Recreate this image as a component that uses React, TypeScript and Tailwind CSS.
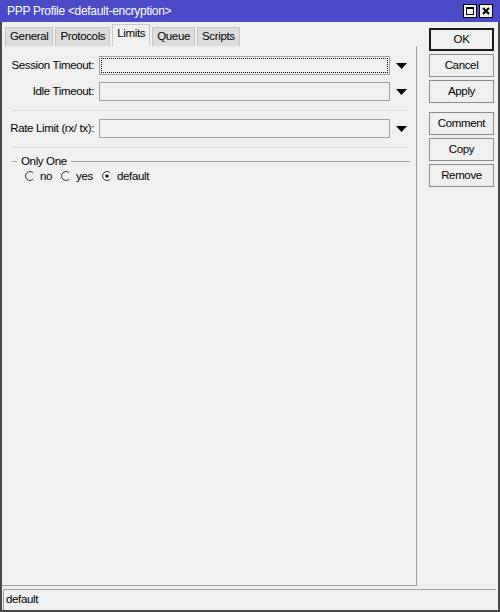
import React from "react";

const font = { fontFamily: '"Liberation Sans", Arial, sans-serif' };

function Arrow() {
  return (
    <svg width="11" height="6" viewBox="0 0 11 6" className="shrink-0">
      <path d="M0 0 H11 L5.5 6 Z" fill="#000" />
    </svg>
  );
}

function Radio({ checked }: { checked?: boolean }) {
  return (
    <svg width="10" height="10" viewBox="0 0 10 10" className="shrink-0">
      <path d="M8.2 1.8 A4.5 4.5 0 1 0 8.2 8.2" fill="none" stroke="#333" strokeWidth="1" />
      <path d="M8.2 8.2 A4.5 4.5 0 0 0 8.2 1.8" fill="none" stroke="#e0e0e0" strokeWidth="1" />
      {checked && <circle cx="5" cy="5" r="1.6" fill="#000" />}
    </svg>
  );
}

function Field({ label, focused }: { label: string; focused?: boolean }) {
  return (
    <div className="flex items-center h-[19px]">
      <div className="w-[95px] text-right pr-[5px] whitespace-nowrap">{label}</div>
      <div className="w-[291px] h-[19px] border border-[#a0a0a0] bg-[#f0f0f0] p-[1px]">
        {focused && <div className="h-full border border-dotted border-black" />}
      </div>
      <div className="ml-[6px]">
        <Arrow />
      </div>
    </div>
  );
}

function Btn({ children, primary }: { children: React.ReactNode; primary?: boolean }) {
  return (
    <div
      className={
        "w-[65px] h-[23px] flex items-center justify-center bg-[#f0f0f0] " +
        (primary ? "border-2 border-[#1a1a1a]" : "border border-[#8c8c8c]")
      }
    >
      {children}
    </div>
  );
}

const tabs = ["General", "Protocols", "Limits", "Queue", "Scripts"];

export default function App() {
  return (
    <div
      style={font}
      className="w-[500px] h-[612px] flex flex-col bg-[#f0f0f0] border-2 border-t-0 border-[#474747] text-[11.5px] tracking-[-0.35px] text-black leading-none"
    >
      {/* title bar */}
      <div className="h-[22px] bg-[#4b4bc8] flex items-center pl-[5px] pr-[7px] text-white text-[12px] tracking-[-0.3px] -mx-[2px]">
        <span className="flex-1 pl-[2px]">PPP Profile &lt;default-encryption&gt;</span>
        <div className="flex gap-[2px]">
          <div className="w-[14px] h-[14px] bg-[#f0f0f0] border border-black flex items-center justify-center">
            <div className="w-[8px] h-[8px] border border-black border-t-2" />
          </div>
          <div className="w-[14px] h-[14px] bg-[#f0f0f0] border border-black flex items-center justify-center">
            <svg width="8" height="8" viewBox="0 0 8 8">
              <path d="M1 1 L7 7 M7 1 L1 7" stroke="#000" strokeWidth="2" />
            </svg>
          </div>
        </div>
      </div>

      <div className="flex-1 flex">
        {/* left: tabs + page */}
        <div className="w-[416px] flex flex-col">
          <div className="flex items-end h-[24px] pl-[3px] gap-[2px]">
            {tabs.map((t) => (
              <div
                key={t}
                className={
                  "px-[4px] flex items-center border border-b-0 " +
                  (t === "Limits"
                    ? "h-[22px] bg-[#f0f0f0] border-[#c8c8c8] pb-[3px]"
                    : "h-[19px] bg-[#dcdcdc] border-[#c4c4c4]")
                }
              >
                {t}
              </div>
            ))}
          </div>

          <div className="flex-1 border-r border-b border-[#a0a0a0] pt-[10px] pl-[2px]">
            <div className="flex flex-col">
              <Field label="Session Timeout:" focused />
              <div className="h-[7px]" />
              <Field label="Idle Timeout:" />
              <div className="mx-[8px] mt-[9px] mb-[8px] border-t border-[#dcdcdc]" />
              <Field label="Rate Limit (rx/ tx):" />
              <div className="mx-[8px] mt-[9px] border-t border-[#dcdcdc]" />

              <div className="flex items-center mt-[8px] pl-[8px] pr-[6px]">
                <div className="w-[5px] border-t border-[#a0a0a0]" />
                <span className="px-[4px]">Only One</span>
                <div className="flex-1 border-t border-[#a0a0a0]" />
              </div>
              <div className="flex items-center gap-[9px] mt-[3px] pl-[21px]">
                <label className="flex items-center gap-[5px]">
                  <Radio /> no
                </label>
                <label className="flex items-center gap-[5px]">
                  <Radio /> yes
                </label>
                <label className="flex items-center gap-[5px]">
                  <Radio checked /> default
                </label>
              </div>
            </div>
          </div>
        </div>

        {/* right: buttons */}
        <div className="flex-1 flex flex-col items-center pt-[6px] pl-[12px] pr-[4px]">
          <div className="flex flex-col gap-[3px]">
            <Btn primary>OK</Btn>
            <Btn>Cancel</Btn>
            <Btn>Apply</Btn>
          </div>
          <div className="flex flex-col gap-[3px] mt-[9px]">
            <Btn>Comment</Btn>
            <Btn>Copy</Btn>
            <Btn>Remove</Btn>
          </div>
        </div>
      </div>

      {/* status bar */}
      <div className="h-[21px] mt-[3px] border-t border-l border-[#a0a0a0] ml-[1px] mr-[2px] flex items-center pl-[2px]">
        default
      </div>
    </div>
  );
}
